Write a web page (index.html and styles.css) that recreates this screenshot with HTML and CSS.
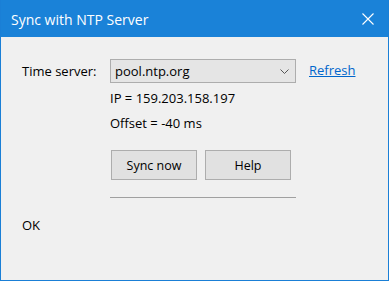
FILE: index.html
```html
<!DOCTYPE html>
<html>
<head>
<meta charset="utf-8">
<link rel="stylesheet" href="styles.css">
</head>
<body>
<div class="window">
  <div class="titlebar">
    <span class="title">Sync with NTP Server</span>
    <span class="close">
      <svg width="12" height="12" viewBox="0 0 12 12"><path d="M0.5 0.5 L11.5 11.5 M11.5 0.5 L0.5 11.5" stroke="#fff" stroke-width="1.1" fill="none"/></svg>
    </span>
  </div>
  <div class="content">
    <div class="form">
      <div class="label">Time server:</div>
      <div class="combo">
        <span class="combo-text">pool.ntp.org</span>
        <svg class="chev" width="9" height="5" viewBox="0 0 9 5"><path d="M0.5 0.5 L4.5 4.5 L8.5 0.5" stroke="#555" stroke-width="1" fill="none"/></svg>
      </div>
      <a class="link">Refresh</a>
      <div class="info ip">IP = 159.203.158.197</div>
      <div class="info offset">Offset = -40 ms</div>
      <div class="buttons">
        <button class="btn">Sync now</button>
        <button class="btn">Help</button>
      </div>
      <div class="sep"></div>
    </div>
    <div class="status">OK</div>
  </div>
</div>
</body>
</html>
```
FILE: styles.css
```css
html, body {
  margin: 0;
  padding: 0;
}
body {
  width: 389px;
  height: 281px;
  overflow: hidden;
  font-family: "Open Sans", "Noto Sans", sans-serif;
  font-size: 13px;
  color: #000;
}
.window {
  box-sizing: border-box;
  width: 389px;
  height: 281px;
  border: 1px solid #1a7fd6;
  border-top: none;
  background: #f0f0f0;
  display: flex;
  flex-direction: column;
}
.titlebar {
  height: 37px;
  background: #1a82d8;
  color: #fff;
  display: flex;
  align-items: center;
  justify-content: space-between;
  padding: 0 14px 0 10px;
  flex: none;
}
.title {
  font-size: 14px;
  line-height: 20px;
  margin-top: 2px;
}
.close {
  display: flex;
  margin-top: 1px;
}
.content {
  padding: 22px 0 0 21px;
}
.form {
  display: grid;
  grid-template-columns: 88px 186px auto;
  align-items: center;
}
.label {
  line-height: 16px;
}
.combo {
  box-sizing: border-box;
  height: 24px;
  border: 1px solid #adadad;
  background: #e5e5e5;
  display: flex;
  align-items: center;
  justify-content: space-between;
  padding: 0 6px 0 4px;
}
.combo-text {
  line-height: 16px;
}
.link {
  color: #0066cc;
  text-decoration: underline;
  line-height: 16px;
  margin-top: -2px;
  margin-left: 13px;
}
.info {
  grid-column: 2 / 4;
  line-height: 16px;
}
.ip {
  margin-top: 7px;
}
.offset {
  margin-top: 9px;
}
.buttons {
  grid-column: 2 / 4;
  display: flex;
  gap: 8px;
  margin-top: 19px;
  padding-left: 1px;
}
.btn {
  box-sizing: border-box;
  width: 86px;
  height: 30px;
  border: 1px solid #adadad;
  background: #e1e1e1;
  font-family: inherit;
  font-size: 12.5px;
  color: #000;
  padding: 0;
  margin: 0;
}
.sep {
  grid-column: 2 / 3;
  height: 1px;
  background: #a0a0a0;
  margin-top: 17px;
}
.status {
  margin-top: 19px;
  line-height: 16px;
}
```
